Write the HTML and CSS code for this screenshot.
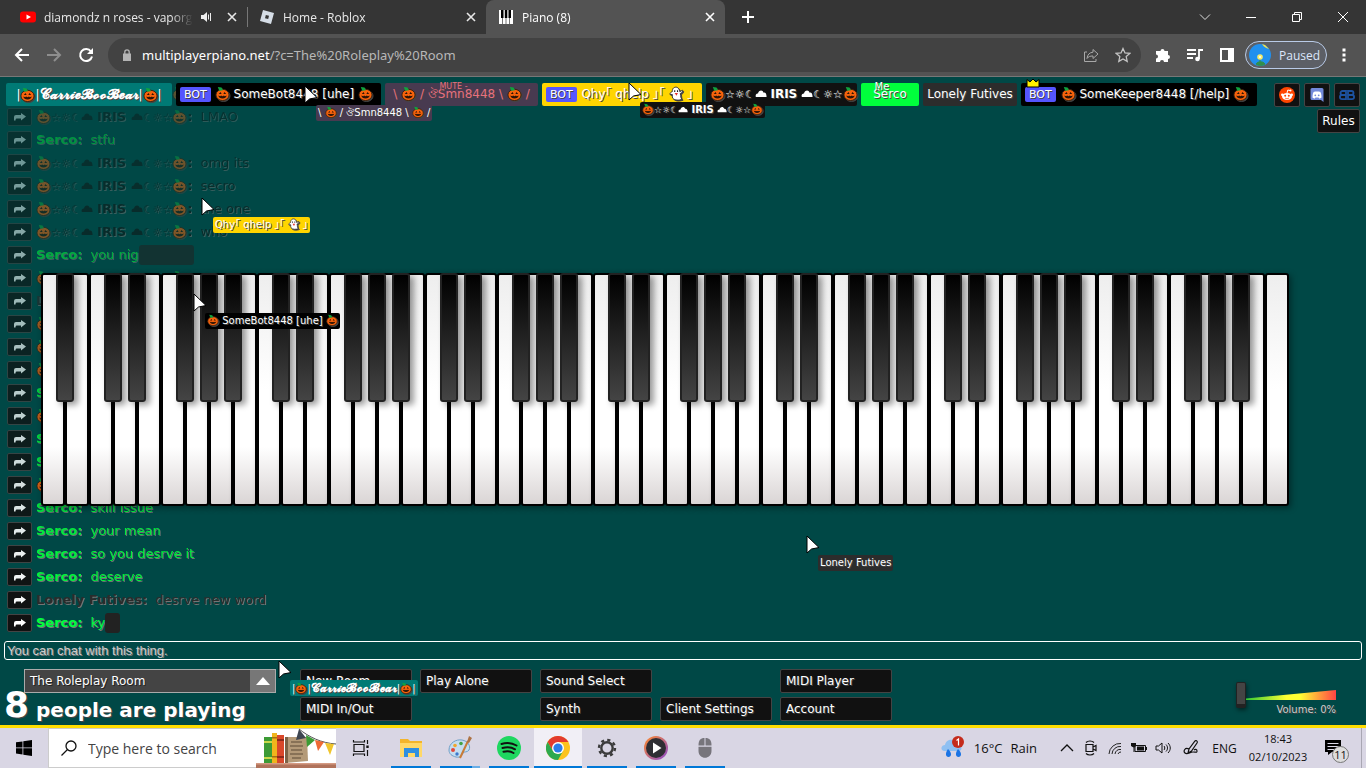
FILE: index.html
```html
<!DOCTYPE html>
<html lang="en">
<head>
<meta charset="UTF-8">
<meta name="viewport" content="width=device-width, initial-scale=1.0">
<title>Piano (8)</title>
<link rel="stylesheet" href="styles.css">
</head>
<body>
<svg class="defs" aria-hidden="true">
    <symbol id="pumpkin" viewBox="0 0 16 16">
        <ellipse cx="8" cy="9.500" rx="7" ry="6" fill="#f7630c" stroke="#38200f" stroke-width="1"/>
        <path d="M8.500 4.500L7 1.500 3 1 4.500 5z" fill="#10a33e"/>
        <path d="M4 8.500l2-2L7 8.500zM9 8.500l1-2 2 2zM3.500 10l2 1 1-.8 1.500.8 1.500-.8 1 .8 2-1c-.5 2-2 3.200-4.500 3.200S4 12 3.500 10z" fill="#2b1306"/>
    </symbol>
    <symbol id="ghost" viewBox="0 0 16 16">
        <path d="M5 2c3-2 6 0 6.500 4l3-1.500c.5 1.500-1 3-2.500 3.500 1 3 0 5 2 6-3 1.500-8 1.500-10-1C3 11 4 10 3.500 9L1 9c0-1.500 1-2.500 2.500-3C3.500 4 4 3 5 2z" fill="#fff" stroke="#333"/>
        <path d="M5.500 4.500h1.200v1.800H5.500zM8.500 4.500h1.200v1.800H8.500z" fill="#222"/>
        <path d="M6 7.500h3.500L8 10.500z" fill="#e3342f"/>
    </symbol>
    <symbol id="cloud" viewBox="0 0 14 12">
        <path d="M1 10C0 7 2 6 3.500 6 4 2 9 1 10 5c2-.5 3.500 1 3.500 5z" fill="currentColor"/>
    </symbol>
    <symbol id="pointer" viewBox="0 0 14 20">
        <path d="M1 1v17l4.500-4L13 12.500z" fill="#fff" stroke="#000" stroke-width="1"/>
    </symbol>
    <symbol id="close" viewBox="0 0 10 10">
        <path d="M1 1l8 8M9 1L1 9" stroke="currentColor" stroke-width="1.600"/>
    </symbol>
</svg>

<div class="tabs">
    <div class="tab">
        <svg class="favicon" viewBox="0 0 16 16"><rect y="2.500" width="16" height="11" rx="3" fill="#f00"/><path d="M6.500 5.500v5L11 8z" fill="#fff"/></svg>
        <span class="tab-title">diamondz n roses - vaporgo</span>
        <svg class="sound" viewBox="0 0 12 12"><path d="M0 4h2.500L6 1v10L2.500 8H0z" fill="#eee"/><path d="M7.500 3.500v5M9.500 2v8" stroke="#eee" fill="none"/></svg>
        <button class="tab-close" aria-label="Close tab"><svg><use href="#close"/></svg></button>
    </div>
    <div class="tab divided">
        <svg class="favicon" viewBox="0 0 16 16"><path d="M4 1l11 3-3 11L1 12z" fill="#d5dde6"/><path d="M6.800 6l3.200.8-.8 3.200-3.200-.8z" fill="#353535"/></svg>
        <span class="tab-title">Home - Roblox</span>
        <button class="tab-close" aria-label="Close tab"><svg><use href="#close"/></svg></button>
    </div>
    <div class="tab active">
        <svg class="favicon" viewBox="0 0 16 16"><path d="M1 1h14v14H1z" fill="#fff"/><path d="M4.500 1v14M8 1v14M11.500 1v14" stroke="#777"/><path d="M3 1h2.500v8H3zM6.800 1h2.500v8H6.800zM10.500 1H13v8h-2.500z" fill="#000"/></svg>
        <span class="tab-title">Piano (8)</span>
        <button class="tab-close" aria-label="Close tab"><svg><use href="#close"/></svg></button>
    </div>
    <button class="new-tab" aria-label="New tab"><svg viewBox="0 0 12 12"><path d="M6 0v12M0 6h12" stroke="#fff" stroke-width="2"/></svg></button>
    <div class="window-buttons">
        <button aria-label="Search tabs"><svg viewBox="0 0 12 12"><path d="M1 3.500l5 5 5-5" stroke="#ddd" fill="none"/></svg></button>
        <button aria-label="Minimize"><svg viewBox="0 0 12 12"><path d="M1 6.500h10" stroke="#fff"/></svg></button>
        <button aria-label="Restore"><svg viewBox="0 0 12 12"><path d="M1.500 3.500h7v7h-7zM3.500 3.500v-2h7v7h-2" stroke="#fff" fill="none"/></svg></button>
        <button aria-label="Close"><svg viewBox="0 0 12 12"><path d="M1 1l10 10M11 1L1 11" stroke="#fff"/></svg></button>
    </div>
</div>

<div class="toolbar">
    <button class="tool" aria-label="Back"><svg viewBox="0 0 16 16"><path d="M15 8H2M8 2L2 8l6 6" stroke="#fff" stroke-width="2" fill="none"/></svg></button>
    <button class="tool" aria-label="Forward"><svg viewBox="0 0 16 16"><path d="M1 8h13M8 2l6 6-6 6" stroke="#8e8e8e" stroke-width="2" fill="none"/></svg></button>
    <button class="tool" aria-label="Reload"><svg viewBox="0 0 16 16"><path d="M13 4.500A6 6 0 1 0 14 9.500" stroke="#fff" stroke-width="2" fill="none"/><path d="M15 1v6H9z" fill="#fff"/></svg></button>
    <div class="omnibox">
        <svg class="lock" viewBox="0 0 10 12"><path d="M1 4.500h8V12H1z" fill="#b4b4b4"/><path d="M2.800 5V3a2.200 2.200 0 0 1 4.400 0v2" stroke="#b4b4b4" stroke-width="1.300" fill="none"/></svg>
        <span class="url"><b>multiplayerpiano.net</b>/?c=The%20Roleplay%20Room</span>
        <svg class="omni-icon" viewBox="0 0 16 16"><path d="M4 5H1.500v9.500H13V12" stroke="#a8a8a8" fill="none"/><path d="M10 2.500L15 7l-5 4.500V9c-3 0-4.500.5-6 2.500.4-4 2.600-6 6-6.300z" stroke="#a8a8a8" fill="none"/></svg>
        <svg class="omni-icon" viewBox="0 0 16 16"><path d="M8 1.500l2 4.400 4.800.5-3.600 3.200 1 4.800L8 12l-4.200 2.400 1-4.800L1.200 6.400 6 5.900z" stroke="#c4c4c4" stroke-width="1.300" fill="none"/></svg>
    </div>
    <button class="tool" aria-label="Extensions"><svg viewBox="0 0 16 16"><path d="M1 4h4.500a2 2 0 1 1 4 0H13v4a2 2 0 1 1 0 4v3H9a2 2 0 1 0-4 0H1v-3.500a2 2 0 1 0 0-4z" fill="#fff"/></svg></button>
    <button class="tool" aria-label="Media"><svg viewBox="0 0 16 16"><path d="M0 3h9M0 7h9M0 11h6M12 12V3h4" stroke="#fff" stroke-width="1.800" fill="none"/><circle cx="10.500" cy="12" r="2.300" fill="#fff"/></svg></button>
    <button class="tool" aria-label="Side panel"><svg viewBox="0 0 16 16"><path d="M2 2h12v12H2z" stroke="#fff" stroke-width="2" fill="none"/><path d="M9 2h5v12H9z" fill="#fff"/></svg></button>
    <button class="profile">
        <svg viewBox="0 0 22 22"><circle cx="11" cy="11" r="11" fill="#2190ee"/><path d="M13 0c2 3 4 4 7 5L16 1z" fill="#f6e34b"/><path d="M11 14v5M7 20c2-3 7-3 9 0-3 2-6 2-9 0z" fill="#318f4c" stroke="#318f4c"/><circle cx="11" cy="13" r="2.800" fill="#f7ec6b"/><circle cx="11" cy="13" r="1" fill="#fff"/></svg>
        Paused
    </button>
    <button class="menu" aria-label="Menu"><svg viewBox="0 0 4 14"><path d="M.5.500h3v3h-3zM.5 5.500h3v3h-3zM.5 10.500h3v3h-3z" fill="#fff"/></svg></button>
</div>

<div class="app">
    <ul class="chat" id="chat"></ul>

    <div class="header">
        <div class="names">
            <div class="name carrie">|<svg class="emoji"><use href="#pumpkin"/></svg>|<span class="script">𝓒𝓪𝓻𝓻𝓲𝓮𝓑𝓸𝓸𝓑𝓮𝓪𝓻</span>|<svg class="emoji"><use href="#pumpkin"/></svg>|</div>
            <div class="name somebot"><span class="tag">BOT</span><svg class="emoji"><use href="#pumpkin"/></svg> SomeBot8448 [uhe] <svg class="emoji"><use href="#pumpkin"/></svg></div>
            <div class="name smn muted"><span class="over">MUTE -</span>\ <svg class="emoji"><use href="#pumpkin"/></svg> / ঔSmn8448 \ <svg class="emoji"><use href="#pumpkin"/></svg> /</div>
            <div class="name qhy"><span class="tag">BOT</span>Qhy｢ qhelp ｣｢ <svg class="emoji"><use href="#ghost"/></svg> ｣</div>
            <div class="name iris"><svg class="emoji"><use href="#pumpkin"/></svg><span class="sym">☆☼☾</span><svg class="cloud"><use href="#cloud"/></svg> <b>IRIS</b> <svg class="cloud"><use href="#cloud"/></svg><span class="sym">☾☼☆</span><svg class="emoji"><use href="#pumpkin"/></svg></div>
            <div class="name serco"><span class="over">Me</span>Serco</div>
            <div class="name lonely">Lonely Futives</div>
            <div class="name keeper"><svg class="crown" viewBox="0 0 14 10"><path d="M1 9V1.500L4 4l3-3 3 3 3-2.500V9z" fill="#fff000" stroke="#000"/></svg><span class="tag">BOT</span><svg class="emoji"><use href="#pumpkin"/></svg> SomeKeeper8448 [/help] <svg class="emoji"><use href="#pumpkin"/></svg></div>
        </div>
        <div class="links">
            <a class="link" href="#" aria-label="Reddit"><svg viewBox="0 0 16 16"><circle cx="8" cy="8" r="8" fill="#ff4500"/><ellipse cx="8" cy="9.500" rx="5" ry="3.500" fill="#fff"/><circle cx="3.300" cy="7.800" r="1.300" fill="#fff"/><circle cx="12.700" cy="7.800" r="1.300" fill="#fff"/><path d="M8 6l.8-3 2.500.6" stroke="#fff" fill="none"/><circle cx="11.500" cy="3.600" r="1" fill="#fff"/><circle cx="6.200" cy="8.800" r="1" fill="#ff4500"/><circle cx="9.800" cy="8.800" r="1" fill="#ff4500"/><path d="M6 11c1 .9 3 .9 4 0" stroke="#ff4500" stroke-width=".7" fill="none"/></svg></a>
            <a class="link" href="#" aria-label="Discord"><svg viewBox="0 0 16 16"><path d="M3 1h10a1.500 1.500 0 0 1 1.500 1.500V15L12 13H3a1.500 1.500 0 0 1-1.500-1.500v-9A1.500 1.500 0 0 1 3 1z" fill="#7289da"/><path d="M3.500 10.500c0-3 .5-5 1.500-5.700 1-.5 5-.5 6 0 1 .7 1.500 2.700 1.500 5.700-1 .8-1.500 1-2.300 1l-.7-1h-3l-.7 1c-.8 0-1.300-.2-2.300-1z" fill="#fff"/><circle cx="6.300" cy="8.300" r=".9" fill="#7289da"/><circle cx="9.700" cy="8.300" r=".9" fill="#7289da"/></svg></a>
            <a class="link" href="#" aria-label="BB"><svg viewBox="0 0 16 16"><path d="M7 4H3.500a1.900 1.900 0 0 0 0 4H7H3a2 2 0 0 0 0 4.200h4zM9 4h3.500a1.900 1.900 0 0 1 0 4H9h4a2 2 0 0 1 0 4.200H9z" stroke="#1d52a0" stroke-width="1.800" fill="none"/></svg></a>
            <button class="link rules">Rules</button>
        </div>
    </div>

    <div class="piano" id="piano"></div>

    <input class="chat-input" type="text" placeholder="You can chat with this thing." aria-label="Chat">

    <div class="bottom">
        <div class="room">
            <button class="room-select"><span>The Roleplay Room</span><i><svg viewBox="0 0 14 8"><path d="M0 8l7-8 7 8z" fill="#fff"/></svg></i></button>
            <div class="count"><span>8</span> people are playing</div>
        </div>
        <div class="buttons">
            <button>New Room...</button>
            <button>Play Alone</button>
            <button>Sound Select</button>
            <button class="player">MIDI Player</button>
            <button>MIDI In/Out</button>
            <button class="synth">Synth</button>
            <button>Client Settings</button>
            <button>Account</button>
        </div>
        <div class="volume">
            <input type="range" id="volume" min="0" max="100" value="0">
            <label for="volume">Volume: 0%</label>
        </div>
    </div>

    <div class="cursor at-bot"><svg><use href="#pointer"/></svg><span class="label black"><svg class="emoji"><use href="#pumpkin"/></svg> SomeBot8448 [uhe] <svg class="emoji"><use href="#pumpkin"/></svg></span></div>
    <div class="cursor at-somebot"><svg><use href="#pointer"/></svg></div>
    <div class="cursor at-smn"><span class="label purple">\ <svg class="emoji"><use href="#pumpkin"/></svg> / ঔSmn8448 \ <svg class="emoji"><use href="#pumpkin"/></svg> /</span></div>
    <div class="cursor at-iris"><svg><use href="#pointer"/></svg><span class="label dark"><svg class="emoji"><use href="#pumpkin"/></svg><span class="sym">☆☼☾</span><svg class="cloud"><use href="#cloud"/></svg> <b>IRIS</b> <svg class="cloud"><use href="#cloud"/></svg><span class="sym">☾☼☆</span><svg class="emoji"><use href="#pumpkin"/></svg></span></div>
    <div class="cursor at-qhy"><svg><use href="#pointer"/></svg><span class="label gold">Qhy｢ qhelp ｣｢ <svg class="emoji"><use href="#ghost"/></svg> ｣</span></div>
    <div class="cursor at-lonely"><svg><use href="#pointer"/></svg><span class="label grey">Lonely Futives</span></div>
    <div class="cursor at-carrie"><svg><use href="#pointer"/></svg><span class="label teal">|<svg class="emoji"><use href="#pumpkin"/></svg>|<span class="script">𝓒𝓪𝓻𝓻𝓲𝓮𝓑𝓸𝓸𝓑𝓮𝓪𝓻</span>|<svg class="emoji"><use href="#pumpkin"/></svg>|</span></div>
</div>

<div class="taskbar">
    <button class="start" aria-label="Start"><svg viewBox="0 0 16 16"><path d="M0 2.300L6.500 1.400v6.100H0zM7.300 1.300L16 0v7.500H7.300zM0 8.300h6.500v6.200L0 13.600zM7.300 8.300H16V16l-8.700-1.300z" fill="#000"/></svg></button>
    <div class="search">
        <svg class="glass" viewBox="0 0 16 16"><circle cx="10" cy="6" r="5" stroke="#111" stroke-width="1.300" fill="none"/><path d="M6.500 9.500L.5 15.500" stroke="#111" stroke-width="1.300"/></svg>
        <input type="text" placeholder="Type here to search" aria-label="Search">
        <svg class="books" viewBox="0 0 80 40">
            <path d="M0 35h80v5H0z" fill="#b0725a"/><path d="M0 35h80v1.500H0z" fill="#d49a82"/>
            <path d="M8 9h8v26H8z" fill="#3c9b35"/><path d="M8 13h8v2H8zM8 29h8v2H8z" fill="#c8d84a"/>
            <path d="M16 5h5v30h-5z" fill="#f0b51c"/><path d="M16 9h5v1.500h-5zM16 28h5v1.500h-5z" fill="#a56d13"/>
            <path d="M21 7h7v28h-7z" fill="#d9482b"/><path d="M21 11h7v2h-7zM21 28h7v2h-7z" fill="#8e2a1b"/>
            <path d="M29 9h22l1 24-23 2z" fill="#b49a78"/><path d="M29 9h3v26h-3z" fill="#7c6347"/>
            <path d="M35 14h11M34 18h13M35 22h11M34 26h13M36 30h9" stroke="#5d4a36"/>
            <path d="M43 1c10 8 22 14 37 15" stroke="#555" fill="none"/>
            <path d="M43 1l7 9-10 2z" fill="#3e4550"/><path d="M50 7l9 5-8 7z" fill="#3c9b35"/><path d="M59 12l9 2-6 9z" fill="#ee6a35"/><path d="M69 15l9 1-4 11z" fill="#f0c52c"/>
        </svg>
    </div>
    <div class="apps">
        <button class="plain" aria-label="Task view"><svg viewBox="0 0 24 24"><path d="M5 8.500h10v7H5zM4.500 4v2h11V4M4.500 20v-2h11v2M18.500 4v4M18.500 14v6" stroke="#111" stroke-width="1.200" fill="none"/><path d="M17.300 9.500h2.400v2.500h-2.400z" fill="#111"/></svg></button>
        <button aria-label="File Explorer"><svg viewBox="0 0 24 24"><path d="M1 3h8l2 2h12v16H1z" fill="#f3b52b"/><path d="M1 7h22v14H1z" fill="#ffd867"/><path d="M5 21v-9h15v9h-4v-4H9v4z" fill="#2f8fe0"/></svg></button>
        <button class="several" aria-label="Paint"><svg viewBox="0 0 24 24"><path d="M1 14C1 7 8 3 14 4c6 1 9 6 7 10-2 3-5 1-6 3s-2 5-7 4c-4-1-7-3-7-7z" fill="#c5ddef" stroke="#6f9fc8"/><circle cx="5" cy="14" r="2" fill="#e2483d"/><circle cx="7" cy="9.500" r="1.800" fill="#f0a62d"/><circle cx="13" cy="7.500" r="1.800" fill="#44a344"/><circle cx="9" cy="18" r="1.700" fill="#3c78cc"/><path d="M12 22L20 5" stroke="#c97b36" stroke-width="2"/><path d="M19 6l2-6 3 2-3 5z" fill="#ad7344"/></svg></button>
        <button aria-label="Spotify"><svg viewBox="0 0 24 24"><circle cx="12" cy="12" r="12" fill="#1ed760"/><path d="M4.500 8c5-1.500 10.500-1 15 1.500M5.500 12c4-1.200 9-.8 12.500 1.300M6.500 15.800c3.500-1 7-.6 10 1.200" stroke="#111" stroke-width="2" stroke-linecap="round" fill="none"/></svg></button>
        <button class="current" aria-label="Chrome"><svg viewBox="0 0 24 24"><circle cx="12" cy="12" r="12" fill="#fcc31e"/><path d="M1.600 6A12 12 0 0 1 22.400 6H12L7 15z" fill="#e33b2e"/><path d="M1.600 6A12 12 0 0 0 12 24l5-9-5 3-5-3z" fill="#2da94f"/><circle cx="12" cy="12" r="6" fill="#fff"/><circle cx="12" cy="12" r="4.600" fill="#2b7de9"/></svg></button>
        <button aria-label="Settings"><svg viewBox="0 0 24 24"><circle cx="12" cy="12" r="5.700" stroke="#3c3c3c" stroke-width="2.400" fill="none"/><circle cx="12" cy="12" r="8" stroke="#3c3c3c" stroke-width="2.400" stroke-dasharray="3.140 3.140" fill="none"/></svg></button>
        <button aria-label="Media player"><svg viewBox="0 0 24 24"><linearGradient id="ring" x2="1" y2="1"><stop stop-color="#ff8a2a"/><stop offset="1" stop-color="#8a4bd0"/></linearGradient><circle cx="12" cy="12" r="12" fill="url(#ring)"/><circle cx="12" cy="12" r="10" fill="#2e2e33"/><path d="M9 6.500v11l8.500-5.500z" fill="#fff"/></svg></button>
        <button aria-label="Mouse"><svg viewBox="0 0 24 24"><path d="M5.500 9.500h6V2c-4 0-6 2-6 7.500zM12.500 2v7.500h6c0-5.500-2-7.500-6-7.500zM5.500 10.800h13V15c0 9-13 9-13 0z" fill="#77757c"/></svg></button>
    </div>
    <div class="tray">
        <div class="weather">
            <svg viewBox="0 0 26 24"><path d="M4 15C0 14 1 9 5 9 6 3 14 2 16 7c5-1 8 7 3 8z" fill="#8fc0f2"/><path d="M8 13c-3 4-2.500 8 .5 8s4-4-.5-8zM18 13c-3 4-2.500 8 .5 8s4-4-.5-8z" fill="#1b74e4"/><circle cx="18" cy="6" r="6" fill="#c42b1c"/><path d="M16.500 4.500L18.500 3v6.500" stroke="#fff" stroke-width="1.200" fill="none"/></svg>
            <span>16°C</span><span>Rain</span>
        </div>
        <div class="tray-icon"><svg viewBox="0 0 16 16"><path d="M2 11l6-6 6 6" stroke="#111" stroke-width="1.300" fill="none"/></svg></div>
        <div class="tray-icon"><svg viewBox="0 0 16 16"><path d="M3 4.500h7v7H3zM10 7l3-1.500v5L10 9M3 2.500C5 .5 9 .5 11 2.500M3 13.500c2 2 6 2 8 0" stroke="#111" stroke-width="1.200" fill="none"/></svg></div>
        <div class="tray-icon"><svg viewBox="0 0 16 16"><path d="M2 14A11 11 0 0 1 14 3.500M5 14a8 8 0 0 1 9-7.500M8 14a5 5 0 0 1 6-4.500M11 14a3 3 0 0 1 3-2" stroke="#222" fill="none"/></svg></div>
        <div class="tray-icon"><svg viewBox="0 0 16 16"><path d="M4 5.500h10.500v6H4z" stroke="#111" fill="none"/><path d="M6 6.500h7v4H6zM15 7h1v3h-1zM0 3h5v3L3.500 7.500V12h-1V7.500L0 6z" fill="#111"/></svg></div>
        <div class="tray-icon"><svg viewBox="0 0 16 16"><path d="M1 6h2.500L7 3v10l-3.500-3H1zM9 6c1 1 1 3 0 4M11 4.500c2 2 2 5 0 7M13 3c3 3 3 7 0 10" stroke="#111" fill="none"/></svg></div>
        <div class="tray-icon wide"><svg viewBox="0 0 16 16"><path d="M5 13L6 9l6-8c1-1 3 0 2 2L8.500 11zM6 9C2 7 0 11 2 13s5-1 8-1 4 1 4-1-2-2-3-1" stroke="#111" stroke-width="1.200" fill="none"/></svg></div>
        <div class="lang">ENG</div>
        <div class="clock">18:43<br>02/10/2023</div>
        <div class="notes"><svg viewBox="0 0 26 26"><path d="M1 2h16v12H8l-4 3v-3H1z" fill="#000"/><path d="M3.500 5.500h11M3.500 8.500h11M3.500 11.500h7" stroke="#dad7e5"/></svg><span>11</span></div>
    </div>
</div>

<script>
    // 52 white keys starting from A, the black ones sit on the right edge
    var notes = "ABCDEFG";
    var piano = document.getElementById("piano");
    for (var i = 0; i < 52; i++) {
        var key = document.createElement("div");
        key.className = "key";
        if ("ACDFG".indexOf(notes[i % 7]) >= 0 && i < 51) {
            key.innerHTML = '<div class="sharp"></div>';
        }
        piano.appendChild(key);
    }

    var pumpkin = '<svg class="emoji"><use href="#pumpkin"/></svg>';
    var cloud = '<svg class="cloud"><use href="#cloud"/></svg>';
    var people = {
        i: ["from-iris", pumpkin + '<span class="sym">☆☼☾</span>' + cloud + " IRIS " + cloud + '<span class="sym">☾☼☆</span>' + pumpkin],
        s: ["from-serco", "Serco"],
        l: ["from-lonely", "Lonely Futives"]
    };
    var messages = [
        ["i", ""], ["i", "LMAO"], ["s", "stfu"], ["i", "omg its"], ["i", "secro"], ["i", "the one"], ["i", "who"],
        ["s", "you nig", "long"], ["i", ""], ["l", ""], ["i", ""], ["i", ""], ["i", ""], ["s", ""], ["i", ""],
        ["s", ""], ["s", ""], ["i", ""], ["s", "skill issue"], ["s", "your mean"], ["s", "so you desrve it"],
        ["s", "deserve"], ["l", "desrve new word"], ["s", "ky", "short"]
    ];
    var html = "";
    messages.forEach(function (m, n) {
        var opacity = 1 - (messages.length - 1 - n) * 0.028;
        html += '<li class="' + people[m[0]][0] + '" style="opacity: ' + opacity.toFixed(2) + '">' +
            '<button class="reply" aria-label="Reply"><svg viewBox="0 0 12 8"><path d="M0 7.500V4q0-2 2-2h5V0l5 3.500L7 7.500V5.500H2.500q-1 0-1 2z" fill="#fff"/></svg></button>' +
            '<b>' + people[m[0]][1] + ':</b><span class="text">' + m[1] + '</span>' +
            (m[2] ? '<i class="censor ' + m[2] + '"></i>' : '') + '</li>';
    });
    document.getElementById("chat").innerHTML = html;
</script>
</body>
</html>
```
FILE: styles.css
```css
* {
    box-sizing: border-box;
}
body {
    margin: 0;
    height: 100vh;
    display: flex;
    flex-direction: column;
    overflow: hidden;
    font-family: "DejaVu Sans", "Noto Sans CJK JP", sans-serif;
    font-size: 13px;
    color: #fff;
    background-color: #004846;
}
button {
    font-family: inherit;
    border: none;
    padding: 0;
    background: none;
    color: inherit;
    cursor: pointer;
}
svg {
    display: block;
    flex: none;
}
.defs {
    position: absolute;
    width: 0;
    height: 0;
}

/* browser */
.tabs {
    display: flex;
    align-items: center;
    height: 34px;
    padding-left: 8px;
    background-color: #353535;
    font-family: "Open Sans", "Noto Sans", sans-serif;
    font-size: 12px;
    color: #e8e8e8;
}
.tab {
    display: flex;
    align-items: center;
    width: 239px;
    height: 34px;
    padding: 0 10px 0 12px;
}
.tab.divided {
    position: relative;
}
.tab.divided::before {
    content: "";
    position: absolute;
    left: 0;
    width: 1px;
    height: 20px;
    background-color: #777;
}
.tab.active {
    border-radius: 8px 8px 0 0;
    background-color: #535353;
    color: #fff;
}
.favicon {
    width: 16px;
    height: 16px;
}
.tab-title {
    flex: 1;
    margin: 0 8px;
    overflow: hidden;
    white-space: nowrap;
    -webkit-mask-image: linear-gradient(to right, #000 85%, transparent);
    mask-image: linear-gradient(to right, #000 85%, transparent);
}
.sound {
    width: 12px;
    height: 12px;
    margin-right: 14px;
}
.tab-close svg {
    width: 10px;
    height: 10px;
}
.new-tab {
    padding: 0 17px;
}
.new-tab svg, .window-buttons svg {
    width: 12px;
    height: 12px;
}
.window-buttons {
    display: flex;
    margin-left: auto;
    height: 28px;
}
.window-buttons button {
    width: 46px;
    display: flex;
    align-items: center;
    justify-content: center;
}
.toolbar {
    display: flex;
    align-items: center;
    height: 43px;
    padding: 0 6px;
    border-bottom: 1px solid #777;
    background-color: #535353;
    font-family: "Open Sans", "Noto Sans", sans-serif;
}
.tool {
    width: 32px;
    display: flex;
    justify-content: center;
}
.tool svg, .omni-icon {
    width: 16px;
    height: 16px;
}
.omnibox {
    flex: 1;
    display: flex;
    align-items: center;
    height: 34px;
    margin: 0 6px;
    padding: 0 10px 0 14px;
    border-radius: 17px;
    background-color: #424242;
    font-family: "Noto Sans", "Open Sans", sans-serif;
    font-size: 13px;
    color: #b8b8b8;
}
.lock {
    width: 10px;
    height: 12px;
    margin-right: 10px;
}
.url {
    flex: 1;
}
.url b {
    font-weight: normal;
    color: #fff;
}
.omni-icon + .omni-icon {
    margin-left: 16px;
}
.profile {
    display: flex;
    align-items: center;
    width: 82px;
    height: 28px;
    margin-left: 2px;
    padding-left: 3px;
    gap: 8px;
    border: 1px solid #b9cbe8;
    border-radius: 14px;
    background-color: #5c5f66;
    font-size: 12px;
    color: #dbe6fb;
}
.profile svg {
    width: 22px;
    height: 22px;
}
.menu {
    padding: 0 14px 0 15px;
}
.menu svg {
    width: 4px;
    height: 14px;
}

/* piano page: the chat shares its grid cells with the header and the piano */
.app {
    position: relative;
    flex: 1;
    min-height: 0;
    overflow: hidden;
    display: grid;
    grid-template-columns: 100%;
    grid-template-rows: auto minmax(0, 1fr) auto auto;
    border-bottom: 3px solid #ffdd00;
    background-color: #004846;
}
.emoji {
    display: inline-block;
    width: 15px;
    height: 15px;
    vertical-align: -3px;
    filter: drop-shadow(1px 1px 0 #444);
}
.cloud {
    display: inline-block;
    width: 12px;
    height: 11px;
    vertical-align: -1px;
}
.sym {
    font-size: 11px;
    font-weight: normal;
}
.script {
    font-size: 14px;
    font-weight: bold;
}
.header {
    grid-area: 1 / 1;
    z-index: 2;
    display: flex;
    align-items: flex-start;
    justify-content: space-between;
    height: 60px;
    padding: 6px;
}
.names {
    display: flex;
    gap: 4px;
}
.name {
    position: relative;
    height: 23px;
    padding: 0 4px;
    border-radius: 2px;
    font-size: 12px;
    line-height: 23px;
    text-align: center;
    white-space: nowrap;
    text-shadow: 1px 1px 0 #444;
}
.name .tag {
    float: left;
    height: 15px;
    margin-top: 4px;
    padding: 0 4px;
    border-radius: 2px;
    background-color: #5555ff;
    font-size: 11px;
    line-height: 15px;
}
.over {
    position: absolute;
    left: 0;
    right: 16px;
    top: -3px;
    font-size: 10px;
    line-height: 13px;
}
.carrie {
    width: 166px;
    background-color: #007a75;
}
.somebot {
    width: 205px;
    background-color: #000;
}
.smn {
    width: 153px;
    background-color: #483a50;
}
.muted {
    color: #e87080;
}
.muted .over {
    font-size: 8px;
}
.qhy {
    width: 160px;
    background-color: #ffd500;
}
.iris {
    width: 151px;
    background-color: #111;
}
.serco {
    width: 58px;
    background-color: #00ff3c;
}
.lonely {
    width: 94px;
    background-color: #2c2c2c;
}
.keeper {
    width: 236px;
    background-color: #000;
}
.crown {
    position: absolute;
    left: 5px;
    top: -5px;
    width: 14px;
    height: 10px;
}
.links {
    display: flex;
    flex-wrap: wrap;
    justify-content: flex-end;
    width: 88px;
    gap: 2px 4px;
}
.link {
    display: flex;
    align-items: center;
    justify-content: center;
    width: 26px;
    height: 24px;
    border: 1px solid #444;
    border-radius: 2px;
    background-color: #111;
}
.link svg {
    width: 16px;
    height: 16px;
}
.rules {
    width: 43px;
    font-size: 12px;
}

.chat {
    grid-area: 1 / 1 / 3 / 2;
    display: flex;
    flex-direction: column;
    justify-content: flex-end;
    min-height: 0;
    margin: 0 0 7px;
    padding: 0 7px;
    overflow: hidden;
    list-style: none;
    text-shadow: 1px 1px 0 #777;
}
.chat li {
    flex: none;
    display: flex;
    align-items: center;
    height: 23px;
    white-space: nowrap;
}
.chat .text {
    margin-left: 8px;
}
.reply {
    display: flex;
    align-items: center;
    justify-content: center;
    width: 25px;
    height: 18px;
    margin-right: 4px;
    border: 1px solid #444;
    border-radius: 2px;
    background-color: #111;
}
.reply svg {
    width: 12px;
    height: 8px;
}
.from-iris {
    color: #111;
}
.from-serco {
    color: #00ff3c;
}
.from-lonely {
    color: #2c2c2c;
}
.censor {
    height: 20px;
    border-radius: 3px;
    background-color: #222;
}
.censor.long {
    width: 55px;
}
.censor.short {
    width: 15px;
}

.piano {
    grid-area: 2 / 1;
    align-self: center;
    z-index: 1;
    display: flex;
    height: 233px;
    margin: 0 77px 0 41px;
}
.key {
    position: relative;
    flex: 1;
    border: 2px solid #000;
    border-radius: 3px;
    background: linear-gradient(#eee, #fff 50%, #fff 75%, #dad5d5);
    box-shadow: 2px 2px 6px rgba(0, 0, 0, 0.4);
}
.sharp {
    position: absolute;
    z-index: 1;
    top: -2px;
    right: -11px;
    width: 18px;
    height: 129px;
    border: 2px solid #222;
    border-radius: 3px;
    background: linear-gradient(#000, #444);
    box-shadow: 4px 3px 6px rgba(0, 0, 0, 0.4);
}

.chat-input {
    grid-area: 3 / 1;
    height: 19px;
    margin: 0 4px;
    padding: 0 2px;
    border: 1px solid #fff;
    border-radius: 3px;
    background: transparent;
    color: #fff;
    font-family: "Liberation Sans", Arial, sans-serif;
    font-size: 13px;
    text-shadow: 1px 1px 0 #777;
}
.chat-input::placeholder {
    color: #ccc;
    opacity: 1;
}
.bottom {
    grid-area: 4 / 1;
    display: flex;
    align-items: flex-start;
    height: 65px;
    padding: 9px 30px 4px 0;
}
.room {
    width: 300px;
}
.room-select {
    display: flex;
    width: 252px;
    height: 24px;
    margin-left: 24px;
    border: 1px solid #aaa;
    background-color: #444;
    font-size: 12px;
    line-height: 22px;
    text-align: left;
    text-shadow: 1px 1px 0 #222;
}
.room-select span {
    flex: 1;
    padding-left: 5px;
}
.room-select i {
    display: flex;
    align-items: center;
    justify-content: center;
    width: 25px;
    height: 22px;
    background-color: #777;
}
.room-select svg {
    width: 14px;
    height: 8px;
}
.count {
    padding-left: 4px;
    font-size: 20px;
    font-weight: bold;
    line-height: 24px;
    white-space: nowrap;
    text-shadow: 1px 1px 0 #444;
}
.count span {
    font-size: 36px;
}
.buttons {
    display: grid;
    grid-template-columns: repeat(5, 112px);
    grid-auto-rows: 24px;
    gap: 4px 8px;
}
.buttons button {
    padding-left: 5px;
    border: 1px solid #444;
    border-radius: 2px;
    background-color: #111;
    font-size: 12px;
    text-align: left;
    text-shadow: 1px 1px 0 #444;
}
.buttons .player {
    grid-column: 5;
}
.buttons .synth {
    grid-column: 3;
}
.volume {
    display: flex;
    flex-direction: column;
    width: 100px;
    margin-left: auto;
    padding-top: 13px;
    font-size: 10px;
    line-height: 12px;
    text-align: right;
    color: #ccc;
    text-shadow: 1px 1px 0 #444;
}
.volume input {
    -webkit-appearance: none;
    appearance: none;
    position: relative;
    width: 100px;
    height: 26px;
    margin: 0 0 -4px;
    background: none;
}
.volume input::before {
    content: "";
    position: absolute;
    left: 10px;
    right: 0;
    top: 8px;
    height: 10px;
    background: linear-gradient(to right, #3c3, #ff3 45%, #ff3 60%, #f44);
    clip-path: polygon(0 85%, 100% 0, 100% 100%, 0 100%);
}
.volume input::-webkit-slider-thumb {
    -webkit-appearance: none;
    width: 10px;
    height: 26px;
    border: 1px solid #222;
    border-bottom-width: 4px;
    border-radius: 2px;
    background-color: #444;
    box-shadow: 1px 2px 4px rgba(0, 0, 0, 0.5);
}

.cursor {
    position: absolute;
    z-index: 5;
}
.cursor > svg {
    width: 14px;
    height: 20px;
}
.label {
    display: block;
    height: 16px;
    margin-left: 12px;
    padding: 0 2px;
    border-radius: 2px;
    font-size: 10px;
    line-height: 16px;
    text-align: center;
    white-space: nowrap;
    text-shadow: 1px 1px 0 #444;
}
.label .emoji {
    width: 12px;
    height: 12px;
    vertical-align: -2px;
}
.label .cloud {
    width: 10px;
    height: 9px;
}
.label .sym {
    font-size: 9px;
}
.label .script {
    font-size: 12px;
}
.black { background-color: #000; }
.purple { background-color: #483a50; }
.dark { background-color: #111; }
.gold { background-color: #ffd500; }
.grey { background-color: #2c2c2c; }
.teal { background-color: #007a75; }
.at-bot { left: 193px; top: 216px; }
.at-somebot { left: 304px; top: 8px; }
.at-smn { left: 304px; top: 28px; }
.at-iris { left: 628px; top: 5px; }
.at-qhy { left: 201px; top: 120px; }
.at-lonely { left: 806px; top: 458px; }
.at-carrie { left: 278px; top: 583px; }

/* taskbar */
.taskbar {
    display: flex;
    flex: none;
    height: 40px;
    background-color: #d9d6e4;
    font-family: "Open Sans", "Noto Sans", sans-serif;
    font-size: 12px;
    color: #111;
}
.start {
    width: 48px;
    padding-left: 16px;
}
.start svg {
    width: 16px;
    height: 16px;
}
.search {
    display: flex;
    align-items: center;
    width: 288px;
    padding-left: 12px;
    border: 1px solid #ccc;
    border-right: none;
    background-color: #fff;
}
.glass {
    width: 16px;
    height: 16px;
}
.search input {
    flex: 1;
    min-width: 0;
    padding: 0 0 0 11px;
    border: none;
    background: none;
    font-family: inherit;
    font-size: 14px;
}
.search input::placeholder {
    color: #444;
    opacity: 1;
}
.books {
    width: 80px;
    height: 40px;
}
.apps {
    display: flex;
    gap: 1px;
}
.apps button {
    display: flex;
    flex-direction: column;
    align-items: center;
    justify-content: space-between;
    width: 48px;
    padding-top: 8px;
}
.apps button::after {
    content: "";
    width: 40px;
    height: 2px;
    background-color: #0078d7;
}
.apps .plain {
    width: 50px;
}
.apps .plain::after {
    background: none;
}
.apps .several::after {
    background: linear-gradient(to right, #0078d7 80%, #6aaee6 80%);
}
.apps .current {
    background-color: #f1eff6;
}
.apps .current::after {
    width: 48px;
}
.apps svg {
    width: 24px;
    height: 24px;
}
.tray {
    display: flex;
    align-items: center;
    margin-left: auto;
    padding-right: 4px;
}
.weather {
    display: flex;
    align-items: center;
    gap: 8px;
    margin-right: 18px;
    font-size: 13px;
}
.weather svg {
    width: 26px;
    height: 24px;
}
.tray-icon {
    display: flex;
    justify-content: center;
    width: 24px;
}
.tray-icon.wide {
    width: 32px;
}
.tray-icon svg {
    width: 16px;
    height: 16px;
}
.lang {
    width: 35px;
    text-align: center;
}
.clock {
    width: 72px;
    font-size: 11px;
    line-height: 18px;
    text-align: center;
}
.notes {
    position: relative;
    width: 48px;
    height: 40px;
    padding: 10px 0 0 10px;
    border-right: 1px solid #a9a7b3;
}
.notes svg {
    width: 26px;
    height: 26px;
}
.notes span {
    position: absolute;
    left: 18px;
    top: 18px;
    width: 17px;
    height: 17px;
    border: 1px solid #777;
    border-radius: 50%;
    background-color: #ddd;
    font-size: 11px;
    line-height: 15px;
    text-align: center;
}
```
